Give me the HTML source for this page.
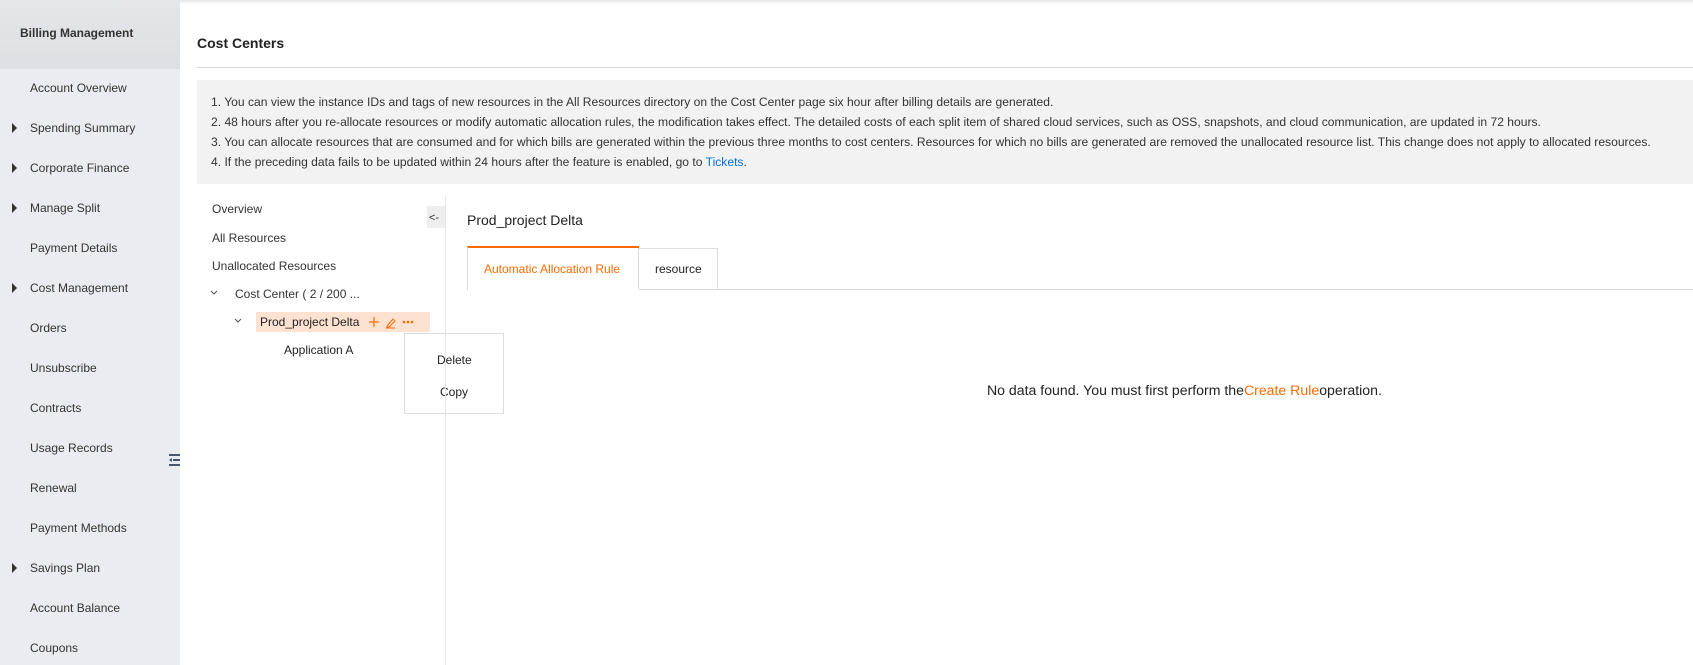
<!DOCTYPE html>
<html><head><meta charset="utf-8"><style>
*{margin:0;padding:0;box-sizing:border-box}
body{width:1693px;height:665px;overflow:hidden;background:#fff;font-family:"Liberation Sans",Arial,sans-serif;color:#333;font-size:12px;position:relative}
.abs{position:absolute;white-space:nowrap}
#side{position:absolute;left:0;top:0;width:180px;height:665px;background:#e9ecf0}
#sidehead{position:absolute;left:0;top:0;width:180px;height:69px;background:linear-gradient(#e4e7ea,#dcdfe3)}
.si{position:absolute;left:30px;font-size:12px;color:#333;line-height:14px}
.tri{position:absolute;left:12px;width:0;height:0;border-top:5px solid transparent;border-bottom:5px solid transparent;border-left:5px solid #333}
.info{position:absolute;left:197px;top:80px;width:1496px;height:104px;background:#f2f2f2}
.il{position:absolute;left:211px;font-size:12.1px;color:#333;line-height:14px;white-space:nowrap}
.t{position:absolute;font-size:12px;color:#333;line-height:14px;white-space:nowrap}
</style></head><body>
<div style="position:absolute;left:0;top:0;width:1693px;height:4px;background:linear-gradient(#e4e4e4,#fff)"></div>
<div id="side"><div id="sidehead"></div></div>
<div class="abs" style="left:20px;top:26px;font-weight:bold;font-size:12px;color:#333">Billing Management</div>
<div class="si" style="top:81px">Account Overview</div>
<div class="tri" style="top:123px"></div><div class="si" style="top:121px">Spending Summary</div>
<div class="tri" style="top:163px"></div><div class="si" style="top:161px">Corporate Finance</div>
<div class="tri" style="top:203px"></div><div class="si" style="top:201px">Manage Split</div>
<div class="si" style="top:241px">Payment Details</div>
<div class="tri" style="top:283px"></div><div class="si" style="top:281px">Cost Management</div>
<div class="si" style="top:321px">Orders</div>
<div class="si" style="top:361px">Unsubscribe</div>
<div class="si" style="top:401px">Contracts</div>
<div class="si" style="top:441px">Usage Records</div>
<div class="si" style="top:481px">Renewal</div>
<div class="si" style="top:521px">Payment Methods</div>
<div class="tri" style="top:563px"></div><div class="si" style="top:561px">Savings Plan</div>
<div class="si" style="top:601px">Account Balance</div>
<div class="si" style="top:641px">Coupons</div>
<svg class="abs" style="left:164px;top:436px" width="18" height="48" viewBox="0 0 18 48"><path d="M16 0 L16 48 L10 44 L2 38 L2 10 L10 4Z" fill="#e9ecf0"/><rect x="5" y="18" width="11" height="2" fill="#4a5566"/><rect x="9" y="23" width="7" height="2" fill="#4a5566"/><rect x="5" y="28" width="11" height="2" fill="#4a5566"/><path d="M5 24 L8 22 L8 26Z" fill="#4a5566"/></svg>

<div class="abs" style="left:197px;top:35px;font-weight:bold;font-size:14px;color:#222">Cost Centers</div>
<div style="position:absolute;left:197px;top:67px;width:1496px;height:1px;background:#d9d9d9"></div>
<div class="info"></div>
<div class="il" style="top:95px">1. You can view the instance IDs and tags of new resources in the All Resources directory on the Cost Center page six hour after billing details are generated.</div>
<div class="il" style="top:115px">2. 48 hours after you re-allocate resources or modify automatic allocation rules, the modification takes effect. The detailed costs of each split item of shared cloud services, such as OSS, snapshots, and cloud communication, are updated in 72 hours.</div>
<div class="il" style="top:135px">3. You can allocate resources that are consumed and for which bills are generated within the previous three months to cost centers. Resources for which no bills are generated are removed the unallocated resource list. This change does not apply to allocated resources.</div>
<div class="il" style="top:155px">4. If the preceding data fails to be updated within 24 hours after the feature is enabled, go to <span style="color:#0070cc">Tickets</span>.</div>

<div class="t" style="left:212px;top:202px">Overview</div>
<div class="t" style="left:212px;top:231px">All Resources</div>
<div class="t" style="left:212px;top:259px">Unallocated Resources</div>
<svg class="abs" style="left:210px;top:290px" width="8" height="6"><path d="M1 1 L4 4 L7 1" stroke="#555" fill="none"/></svg>
<div class="t" style="left:235px;top:287px">Cost Center ( 2 / 200 ...</div>
<svg class="abs" style="left:234px;top:318px" width="8" height="6"><path d="M1 1 L4 4 L7 1" stroke="#555" fill="none"/></svg>
<div style="position:absolute;left:256px;top:312px;width:174px;height:20px;background:#fde2d2"></div>
<div class="t" style="left:260px;top:315px;color:#222">Prod_project Delta</div>
<svg class="abs" style="left:367px;top:315px" width="60" height="14"><path d="M2 7 H12 M7 2 V12" stroke="#ff6a00" stroke-width="1.2"/><path d="M20 11 L26 4 L28 6 L22 12 H20Z M19 13 H28" stroke="#ff6a00" stroke-width="1" fill="none"/><circle cx="37" cy="7" r="1.3" fill="#ff6a00"/><circle cx="41" cy="7" r="1.3" fill="#ff6a00"/><circle cx="45" cy="7" r="1.3" fill="#ff6a00"/></svg>
<div class="t" style="left:284px;top:343px;color:#222">Application A</div>
<div style="position:absolute;left:404px;top:333px;width:100px;height:81px;background:#fff;border:1px solid #ddd"></div>
<div class="t" style="left:437px;top:353px;color:#222">Delete</div>
<div class="t" style="left:440px;top:385px;color:#222">Copy</div>

<div style="position:absolute;left:445px;top:196px;width:1px;height:469px;background:#e6e6e6"></div>
<div style="position:absolute;left:427px;top:206px;width:18px;height:22px;background:#eee"></div>
<div class="t" style="left:429px;top:211px;font-size:11px">&lt;-</div>
<div class="t" style="left:467px;top:212px;font-size:14px;line-height:16px;color:#222">Prod_project Delta</div>
<div style="position:absolute;left:467px;top:289px;width:1226px;height:1px;background:#d9d9d9"></div>
<div style="position:absolute;left:467px;top:246px;width:172px;height:44px;background:#fff;border-left:1px solid #ddd;border-top:2px solid #ff6a00"></div>
<div style="position:absolute;left:638px;top:248px;width:80px;height:41px;background:#fff;border:1px solid #ddd;border-bottom:none"></div>
<div class="t" style="left:484px;top:262px;color:#ff6a00">Automatic Allocation Rule</div>
<div class="t" style="left:655px;top:262px;color:#222">resource</div>
<div class="t" style="left:987px;top:382px;font-size:14.1px;line-height:16px;color:#222">No data found. You must first perform the<span style="color:#ff6a00">Create Rule</span>operation.</div>
</body></html>
